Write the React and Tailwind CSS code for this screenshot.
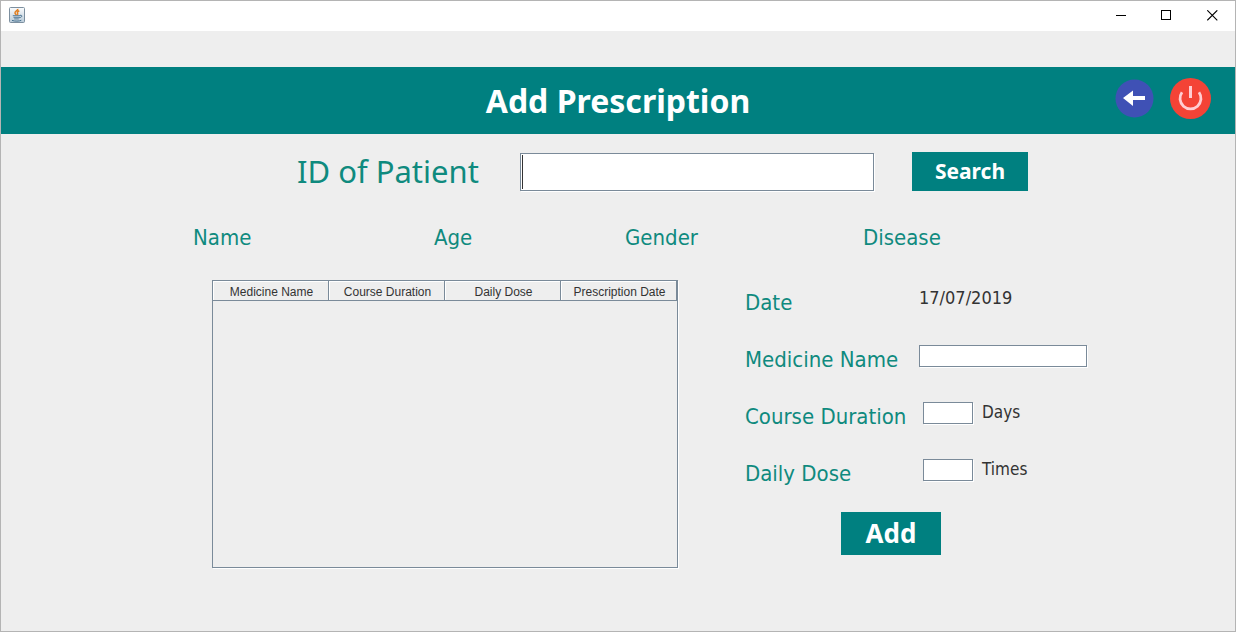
import { useState } from "react";

const label =
  "font-['DejaVu_Sans_Condensed',Tahoma,sans-serif] text-[22px] leading-[38px] text-[#0f8a7e]";
const value =
  "font-['DejaVu_Sans_Condensed',Tahoma,sans-serif] leading-7 text-[#333]";
const field =
  "border border-[#7a8a99] bg-white text-[#333] shadow-[1px_1px_0_#fff] outline-none";
const iconButton = "flex items-center justify-center";

function JavaIcon() {
  return (
    <svg width="16" height="16" viewBox="0 0 16 16" aria-hidden="true">
      <defs>
        <linearGradient id="cup-bg" x1="0" y1="0" x2="0" y2="1">
          <stop offset="0" stopColor="#fbfcfd" />
          <stop offset="1" stopColor="#b9cbd9" />
        </linearGradient>
      </defs>
      <rect x="0.5" y="0.5" width="15" height="15" rx="1" fill="url(#cup-bg)" stroke="#7c8f9f" />
      <path d="M8.800 1.800C9.200 3.600 5.600 4.300 6 6c.2.9 1 1.300 1.300 2M10.300 3.800C8.600 4.500 8 5.400 8.600 6.300c.4.6.2 1.100-.4 1.600" fill="none" stroke="#e07f22" strokeWidth="1.500" />
      <path d="M3.800 8.700h7.200M4.500 10.300h6M5.200 11.900h4.600" fill="none" stroke="#47718f" strokeWidth="0.900" />
      <path d="M11 8.300c2.700-.5 2.400 2.100-.8 2.500M3 13.400c2.800 1 7.200.9 9.300-.1" fill="none" stroke="#47718f" strokeWidth="1" />
    </svg>
  );
}

function TitleBar() {
  return (
    <div className="flex h-[30px] items-center justify-between bg-white pl-2">
      <div className="self-start pt-1.5">
        <JavaIcon />
      </div>
      <div className="flex h-[29px] self-start">
        <button aria-label="Minimize" className={`${iconButton} w-[46px]`}>
          <svg width="11" height="11" viewBox="0 0 11 11" shapeRendering="crispEdges">
            <path d="M1 5.500h10" stroke="#000" />
          </svg>
        </button>
        <button aria-label="Maximize" className={`${iconButton} w-[46px]`}>
          <svg width="11" height="11" viewBox="0 0 11 11" shapeRendering="crispEdges">
            <rect x="0.500" y="0.500" width="9" height="9" fill="none" stroke="#000" />
          </svg>
        </button>
        <button aria-label="Close" className={`${iconButton} w-[46px]`}>
          <svg width="11" height="11" viewBox="0 0 11 11">
            <path d="M0.300 0.300l10 10M10.300 0.300L0.300 10.300" stroke="#000" strokeWidth="1.100" />
          </svg>
        </button>
      </div>
    </div>
  );
}

function Header() {
  return (
    <header className="grid h-[67px] grid-cols-[1fr_auto_1fr] bg-[#008080]">
      <h1 className="col-start-2 self-center text-[32px] leading-[67px] font-bold text-white">
        Add Prescription
      </h1>
      <div className="flex items-center justify-end gap-4 self-start pt-[11px] pr-6">
        <button aria-label="Back" className="flex">
          <svg width="39" height="39" viewBox="0 0 39 39">
            <circle cx="19.500" cy="19.500" r="19" fill="#3f51b5" />
            <path d="M8 19L18 11.500V17H30V21H18V27z" fill="#fff" />
          </svg>
        </button>
        <button aria-label="Log out" className="flex">
          <svg width="41" height="41" viewBox="0 0 41 41">
            <circle cx="20.500" cy="20.500" r="20.500" fill="#f44336" />
            <path d="M12 14.200A10.500 10.500 0 1 0 29 14.200" fill="none" stroke="#ffcdd2" strokeWidth="2.800" />
            <path d="M20.500 8v12" stroke="#ffcdd2" strokeWidth="3" />
          </svg>
        </button>
      </div>
    </header>
  );
}

const columns = ["Medicine Name", "Course Duration", "Daily Dose", "Prescription Date"];

function PrescriptionTable() {
  return (
    <div className="h-[288px] w-[466px] border border-[#7a8a99] shadow-[1px_1px_0_#fff]">
      <table className="w-full table-fixed border-separate border-spacing-0 font-['Liberation_Sans',Arial,sans-serif] text-xs text-[#333]">
        <thead>
          <tr>
            {columns.map((name) => (
              <th
                key={name}
                scope="col"
                className="h-5 border-r border-b border-[#7a8a99] p-0 pt-0.5 pl-[2px] font-normal whitespace-nowrap shadow-[inset_1px_1px_0_#fff]"
              >
                {name}
              </th>
            ))}
          </tr>
        </thead>
        <tbody />
      </table>
    </div>
  );
}

function PrescriptionForm() {
  return (
    <form
      className="flex flex-col gap-[19px] pt-1"
      onSubmit={(e) => e.preventDefault()}
    >
      <div className="flex items-start">
        <span className={`${label} w-[174px]`}>Date</span>
        <span className={`${value} text-lg leading-7`}>17/07/2019</span>
      </div>
      <div className="flex items-start">
        <label htmlFor="medicine" className={`${label} w-[174px]`}>Medicine Name</label>
        <input id="medicine" className={`${field} mt-1 h-[22px] w-[168px] px-1 text-sm`} />
      </div>
      <div className="flex items-start">
        <label htmlFor="duration" className={`${label} w-[178px]`}>Course Duration</label>
        <input id="duration" className={`${field} mt-1 h-[22px] w-[50px] px-1 text-sm`} />
        <span className={`${value} ml-[9px] text-[17px]`}>Days</span>
      </div>
      <div className="flex items-start">
        <label htmlFor="dose" className={`${label} w-[178px]`}>Daily Dose</label>
        <input id="dose" className={`${field} mt-1 h-[22px] w-[50px] px-1 text-sm`} />
        <span className={`${value} ml-[9px] text-[17px]`}>Times</span>
      </div>
      <button className="ml-24 h-[43px] w-[100px] bg-[#008080] text-[26px] leading-[43px] font-bold text-white">
        Add
      </button>
    </form>
  );
}

export default function App() {
  const [id, setId] = useState("");
  return (
    <div className="flex min-h-screen flex-col border border-[#b4b4b4] bg-[#eee] font-['Noto_Sans',Tahoma,sans-serif]">
      <TitleBar />
      <div className="h-9" />
      <Header />
      <main className="mx-auto w-full max-w-[1234px] pt-[18px]">
        <form className="flex items-center pl-[296px]" onSubmit={(e) => e.preventDefault()}>
          <label htmlFor="patient-id" className="w-[223px] text-[31px] leading-[39px] text-[#0f8a7e]">
            ID of Patient
          </label>
          <div className="relative flex">
            <input
              id="patient-id"
              autoFocus
              value={id}
              onChange={(e) => setId(e.target.value)}
              className={`${field} h-[38px] w-[354px] px-px text-[26px] leading-9`}
            />
            {id === "" && (
              <span className="pointer-events-none absolute inset-y-0.5 left-0.5 w-px bg-[#333]" />
            )}
          </div>
          <button className="ml-[38px] h-[39px] w-[116px] bg-[#008080] text-[21px] leading-[39px] font-bold text-white">
            Search
          </button>
        </form>
        <div className="grid grid-cols-[241px_191px_238px_auto] pt-7 pl-48">
          <span className={label}>Name</span>
          <span className={label}>Age</span>
          <span className={label}>Gender</span>
          <span className={label}>Disease</span>
        </div>
        <div className="flex gap-[67px] pt-[23px] pl-[211px]">
          <PrescriptionTable />
          <PrescriptionForm />
        </div>
      </main>
    </div>
  );
}
